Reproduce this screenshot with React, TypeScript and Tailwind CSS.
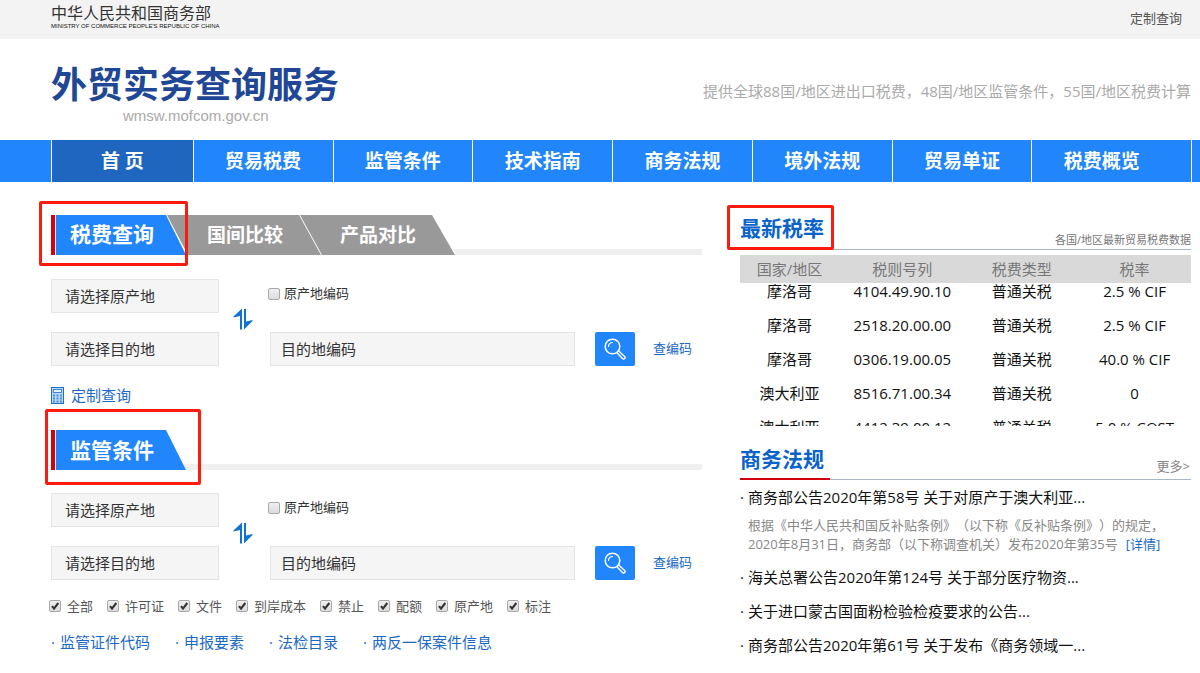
import React from 'react'

const navItems = ['首 页', '贸易税费', '监管条件', '技术指南', '商务法规', '境外法规', '贸易单证', '税费概览']

const rates = [
  { country: '摩洛哥', code: '4104.49.90.10', type: '普通关税', rate: '2.5 % CIF' },
  { country: '摩洛哥', code: '2518.20.00.00', type: '普通关税', rate: '2.5 % CIF' },
  { country: '摩洛哥', code: '0306.19.00.05', type: '普通关税', rate: '40.0 % CIF' },
  { country: '澳大利亚', code: '8516.71.00.34', type: '普通关税', rate: '0' },
  { country: '澳大利亚', code: '4412.39.00.12', type: '普通关税', rate: '5.0 % COST' }
]

const conditions = ['全部', '许可证', '文件', '到岸成本', '禁止', '配额', '原产地', '标注']

const resources = ['监管证件代码', '申报要素', '法检目录', '两反一保案件信息']

const news = [
  '海关总署公告2020年第124号 关于部分医疗物资...',
  '关于进口蒙古国面粉检验检疫要求的公告...',
  '商务部公告2020年第61号 关于发布《商务领域一...'
]

function SwapIcon() {
  return (
    <svg viewBox="0 0 20 22" className="w-5 h-[22px]" aria-hidden="true">
      <path d="M9 0.5V21.5H7V8L0.5 9.5V8.5Z" fill="#0f72d4" />
      <path d="M11 1H13V13.5L19.5 12V13L11 21.5Z" fill="#0f72d4" />
    </svg>
  )
}

function SearchIcon() {
  return (
    <svg viewBox="0 0 22 22" className="w-[22px] h-[22px]" fill="none" stroke="#fff" aria-hidden="true">
      <circle cx="8.5" cy="8.5" r="7.3" strokeWidth="1.5" />
      <path d="M4.5 8.5A4 4 0 0 1 8.5 4.5" strokeWidth="1.2" strokeLinecap="round" />
      <path
        d="M12.9 14.7L18.4 20.6A1.4 1.4 0 0 0 20.6 18.4L14.7 12.9"
        strokeWidth="1.4"
        strokeLinejoin="round"
      />
    </svg>
  )
}

function CalculatorIcon() {
  return (
    <svg viewBox="0 0 13 17" className="w-[13px] h-[17px]" aria-hidden="true">
      <rect x="0.5" y="0.5" width="12" height="16" fill="#b9d8f5" stroke="#1f6fc4" />
      <rect x="2.5" y="2.5" width="8" height="3" fill="#e9f4fd" stroke="#3f86cf" />
      <path d="M2 8.5H11M2 11.5H11M2 14.5H11" stroke="#4b91d8" strokeWidth="2" strokeDasharray="2 1.5" />
    </svg>
  )
}

interface CheckProps {
  id: string
  label: string
  checked?: boolean
  className: string
}

function Check({ id, label, checked = false, className }: CheckProps) {
  return (
    <div className={className}>
      <span className="relative flex">
        <input
          id={id}
          type="checkbox"
          defaultChecked={checked}
          className="peer appearance-none w-3 h-3 border border-[#a8a8a8] rounded-xs bg-linear-to-b from-[#f0f0f0] to-[#dcdcdc]"
        />
        <svg
          viewBox="0 0 12 12"
          className="absolute inset-0 w-3 h-3 hidden peer-checked:block pointer-events-none"
          aria-hidden="true"
        >
          <path d="M3 6.2L5 8.6L9.3 3" fill="none" stroke="#333" strokeWidth="2.1" />
        </svg>
      </span>
      <label htmlFor={id}>{label}</label>
    </div>
  )
}

function QueryForm({ name }: { name: string }) {
  return (
    <form className="grid grid-cols-[168px_51px_1fr] gap-y-[19px]" onSubmit={(e) => e.preventDefault()}>
      <select
        aria-label="原产地"
        className="appearance-none h-[34px] px-[13px] border border-[#e4e4e4] bg-[#f5f5f5] text-[15px] text-[#333]"
      >
        <option>请选择原产地</option>
      </select>
      <div className="row-span-2 flex items-center justify-center pr-1">
        <button type="button" aria-label="交换" className="-mt-2">
          <SwapIcon />
        </button>
      </div>
      <Check
        id={`${name}-origin`}
        label="原产地编码"
        className="flex items-center gap-1 h-[30px] -ml-0.5 text-[13px] text-[#333]"
      />
      <select
        aria-label="目的地"
        className="appearance-none h-[34px] px-[13px] border border-[#e4e4e4] bg-[#f5f5f5] text-[15px] text-[#333]"
      >
        <option>请选择目的地</option>
      </select>
      <div className="flex items-center">
        <input
          type="text"
          aria-label="目的地编码"
          placeholder="目的地编码"
          className="flex-1 min-w-0 h-[34px] px-2.5 border border-[#e4e4e4] bg-[#f5f5f5] text-[15px] placeholder:text-[#333]"
        />
        <button
          type="submit"
          aria-label="查询"
          className="ml-5 w-10 h-[34px] flex items-center justify-center rounded-xs bg-[#2185fb]"
        >
          <SearchIcon />
        </button>
        <a href="#" className="ml-[18px] mr-2.5 text-[13px] text-[#1b69c6]">
          查编码
        </a>
      </div>
    </form>
  )
}

export default function App() {
  return (
    <div className="min-h-screen bg-white text-[#111] font-['Open_Sans','Noto_Sans_CJK_SC',sans-serif] [text-spacing-trim:space-all]">
      <div className="flex justify-between items-center h-[39px] pl-[51px] pr-[18px] bg-[#f3f3f3]">
        <div className="pb-1.5">
          <p className="text-[16px] leading-[18px] text-[#333]">中华人民共和国商务部</p>
          <p className="text-[6px] leading-[8px] text-[#111] font-['Liberation_Sans',sans-serif]">
            MINISTRY OF COMMERCE PEOPLE'S REPUBLIC OF CHINA
          </p>
        </div>
        <a href="#" className="pb-0.5 text-[13px] text-[#555]">
          定制查询
        </a>
      </div>

      <header className="flex justify-between items-center h-[101px] pl-[51px] pr-[9px]">
        <div className="pt-2">
          <h1 className="text-[36px] leading-[44px] font-bold text-[#1f4796]">外贸实务查询服务</h1>
          <p className="pl-[72px] text-[15px] leading-[18px] text-[#aaa] font-['Liberation_Sans',sans-serif]">
            wmsw.mofcom.gov.cn
          </p>
        </div>
        <p className="pt-1 text-[15px] text-[#aaa]">提供全球88国/地区进出口税费，48国/地区监管条件，55国/地区税费计算</p>
      </header>

      <nav className="pl-[51px] pr-2 bg-[#2185fb]">
        <ul className="grid grid-cols-[142fr_repeat(6,140fr)_160fr] border-l border-white">
          {navItems.map((item) => (
            <li key={item} className="border-r border-white last:pr-5 first:bg-[#1f66c0]">
              <a href="#" className="block pt-px text-center text-[19px] leading-[41px] font-bold text-white">
                {item}
              </a>
            </li>
          ))}
        </ul>
      </nav>

      <main className="grid grid-cols-[651fr_451fr] gap-x-[38px] pl-[51px] pr-[9px] pt-[33px]">
        <div>
          <section>
            <div className="relative flex h-10 mb-6 bg-[linear-gradient(#f0f0f0,#f0f0f0)] bg-[length:100%_6px] bg-bottom bg-no-repeat">
              <span className="w-1 bg-[#d4000c]" />
              <span className="w-px bg-white" />
              <span className="flex bg-white [clip-path:polygon(0_0,378px_0,400px_100%,0_100%)]">
                <button className="w-[130px] pl-3.5 text-left text-[21px] font-bold text-white bg-[#2185fb] [clip-path:polygon(0_0,110px_0,100%_100%,0_100%)]">
                  税费查询
                </button>
                <button className="w-[155px] -ml-5 pl-[41px] text-left text-[19px] font-bold text-white bg-[#999] [clip-path:polygon(1px_0,133px_0,100%_100%,22px_100%)]">
                  国间比较
                </button>
                <button className="w-[155px] -ml-[21px] pl-10 text-left text-[19px] font-bold text-white bg-[#999] [clip-path:polygon(0_0,132px_0,100%_100%,22px_100%)]">
                  产品对比
                </button>
              </span>
              <span className="absolute -left-3 -top-3.5 w-[149px] h-[65px] border-3 border-[#fd1b0d] rounded-xs pointer-events-none" />
            </div>
            <QueryForm name="tax" />
            <a href="#" className="flex items-center gap-[7px] mt-[17px] w-fit text-[15px] leading-6 text-[#1b69c6]">
              <CalculatorIcon />
              定制查询
            </a>
          </section>

          <section className="mt-[23px]">
            <div className="relative flex h-10 mb-[23px] bg-[linear-gradient(#f0f0f0,#f0f0f0)] bg-[length:100%_6px] bg-bottom bg-no-repeat">
              <span className="w-1 bg-[#d4000c]" />
              <span className="w-px bg-white" />
              <h2 className="w-[130px] pl-3.5 text-[21px] leading-10 font-bold text-white bg-[#2185fb] [clip-path:polygon(0_0,110px_0,100%_100%,0_100%)]">
                监管条件
              </h2>
              <span className="absolute -left-1.5 -top-[21px] w-[156px] h-[76px] border-3 border-[#fd1b0d] rounded-xs pointer-events-none" />
            </div>
            <QueryForm name="control" />
            <div className="flex gap-3.5 mt-4 -ml-0.5">
              {conditions.map((label, i) => (
                <Check
                  key={label}
                  id={`condition-${i}`}
                  label={label}
                  checked
                  className="flex items-center gap-1.5 text-[13px] leading-5 text-[#555]"
                />
              ))}
            </div>
            <ul className="flex gap-[25px] mt-3.5 text-[15px] leading-6 text-[#1b69c6]">
              {resources.map((item) => (
                <li key={item} className="flex">
                  <span className="w-[9px]">·</span>
                  <a href="#">{item}</a>
                </li>
              ))}
            </ul>
          </section>
        </div>

        <div>
          <section>
            <div className="relative flex justify-between items-end h-[35px] border-b border-[#a9b7c6]">
              <h2 className="h-[35px] pr-1.5 text-[21px] leading-7 font-bold text-[#0a63c9] border-b border-[#d4000c]">
                最新税率
              </h2>
              <span className="text-[11px] leading-[18px] text-[#777]">各国/地区最新贸易税费数据</span>
              <span className="absolute -left-[13px] -top-2.5 w-[107px] h-[45px] border-3 border-[#fd1b0d] rounded-xs pointer-events-none" />
            </div>
            {/* scrolling list, the last row is only partly in view */}
            <div className="mt-[5px] h-[171px] overflow-hidden">
              <table className="w-full table-fixed text-center text-[15px]">
                <colgroup>
                  <col className="w-[22%]" />
                  <col className="w-[28%]" />
                  <col className="w-[25%]" />
                  <col className="w-[25%]" />
                </colgroup>
                <thead className="bg-[#d9d9d9] text-[#777]">
                  <tr>
                    <th className="h-7 p-0 font-normal leading-7">国家/地区</th>
                    <th className="h-7 p-0 font-normal leading-7">税则号列</th>
                    <th className="h-7 p-0 font-normal leading-7">税费类型</th>
                    <th className="h-7 p-0 font-normal leading-7">税率</th>
                  </tr>
                </thead>
                <tbody>
                  {rates.map((row) => (
                    <tr key={row.code} className="h-[34px] align-top leading-4">
                      <td className="p-0">{row.country}</td>
                      <td className="p-0">{row.code}</td>
                      <td className="p-0">{row.type}</td>
                      <td className="p-0">{row.rate}</td>
                    </tr>
                  ))}
                </tbody>
              </table>
            </div>
          </section>

          <section className="mt-5">
            <div className="flex justify-between items-end h-[34px] border-b border-[#a9b7c6]">
              <h2 className="h-[34px] -mb-px pr-1.5 text-[21px] leading-[26px] font-bold text-[#0a63c9] border-b-2 border-[#d4000c]">
                商务法规
              </h2>
              <a href="#" className="pr-px pb-1 text-[13px] leading-[18px] text-[#888]">
                更多&gt;
              </a>
            </div>
            <ul className="text-[15px] leading-[34px]">
              <li className="flex">
                <span className="w-2 shrink-0">·</span>
                <div>
                  <a href="#">商务部公告2020年第58号 关于对原产于澳大利亚...</a>
                  <p className="pt-0.5 pb-1.5 text-[13px] leading-[19px] text-[#888] whitespace-nowrap">
                    根据《中华人民共和国反补贴条例》（以下称《反补贴条例》）的规定，
                    <br />
                    2020年8月31日，商务部（以下称调查机关）发布2020年第35号
                    <a href="#" className="ml-2 text-[#1b69c6]">
                      [详情]
                    </a>
                  </p>
                </div>
              </li>
              {news.map((title) => (
                <li key={title} className="flex">
                  <span className="w-2 shrink-0">·</span>
                  <a href="#">{title}</a>
                </li>
              ))}
            </ul>
          </section>
        </div>
      </main>
    </div>
  )
}
